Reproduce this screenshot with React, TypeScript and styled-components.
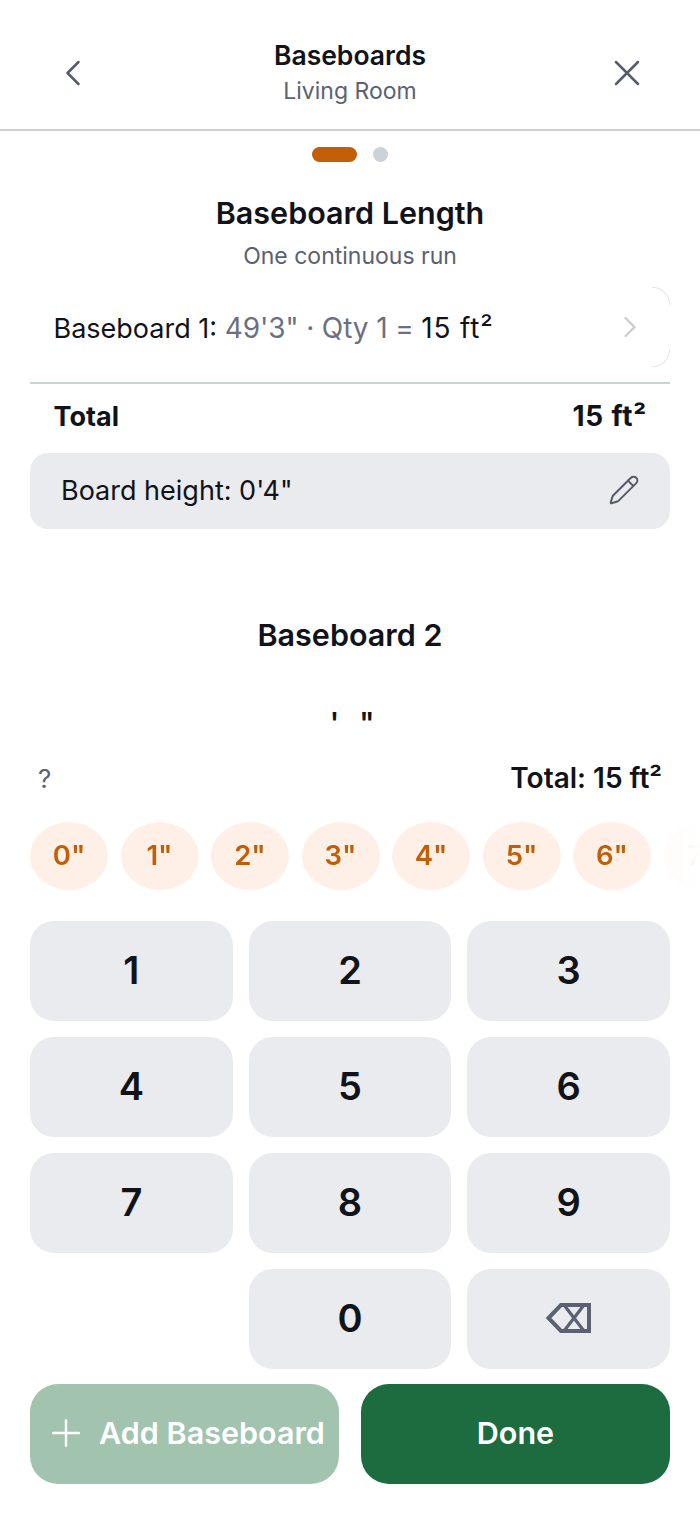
import React from 'react'
import styled, { createGlobalStyle } from 'styled-components'
import { ChevronLeft, ChevronRight, Pencil, Plus, X } from 'lucide-react'

const GlobalStyle = createGlobalStyle`
  html, body {
    margin: 0;
    padding: 0;
    background: #FFFFFF;
  }

  * {
    box-sizing: border-box;
  }
`

const Page = styled.div`
  width: 700px;
  height: 1515px;
  overflow: hidden;
  display: flex;
  flex-direction: column;
  font-family: 'Inter', 'Liberation Sans', sans-serif;
  color: #111318;
  background: #FFFFFF;
`

const Header = styled.header`
  height: 131px;
  flex-shrink: 0;
  display: flex;
  align-items: flex-start;
  justify-content: space-between;
  padding: 51px 40px 0;
  border-bottom: 2px solid #CDD0D5;
`

const IconButton = styled.button`
  width: 66px;
  height: 44px;
  padding: 0;
  display: flex;
  align-items: center;
  justify-content: center;
  border: none;
  background: none;
  color: #555B6A;
`

const HeaderTitles = styled.div`
  display: flex;
  flex-direction: column;
  align-items: center;
  margin-top: -13px;
`

const HeaderTitle = styled.div`
  font-size: 26.5px;
  line-height: 34px;
  font-weight: 600;
`

const HeaderSub = styled.div`
  font-size: 23px;
  line-height: 38px;
  color: #5B6172;
`

const Dots = styled.div`
  display: flex;
  justify-content: center;
  align-items: center;
  gap: 16px;
  margin-top: 16px;
`

const Dot = styled.span<{ $active?: boolean }>`
  width: ${p => (p.$active ? '45px' : '15px')};
  height: 15px;
  border-radius: 8px;
  background: ${p => (p.$active ? '#C25E08' : '#CBD2DA')};
`

const Heading = styled.h1`
  margin: 31px 0 0;
  text-align: center;
  font-size: 30.5px;
  line-height: 40px;
  font-weight: 600;
`

const SubHeading = styled.p`
  margin: 7px 0 0;
  text-align: center;
  font-size: 23px;
  line-height: 32px;
  color: #5B6172;
`

const Content = styled.div`
  padding: 0 30px;
  display: flex;
  flex-direction: column;
`

const EntryCard = styled.div`
  position: relative;
  height: 80px;
  margin-top: 15px;
  padding: 1px 24px 0 23.5px;
  display: flex;
  align-items: center;
  justify-content: space-between;
  font-size: 27px;
  color: #111318;

  &::before,
  &::after {
    content: '';
    position: absolute;
    right: 0;
    width: 17px;
    height: 17px;
    border-right: 1px solid #EAE3E5;
  }

  &::before {
    top: 0;
    border-top: 1px solid #EAE3E5;
    border-top-right-radius: 17px;
  }

  &::after {
    bottom: 0;
    border-bottom: 1px solid #EAE3E5;
    border-bottom-right-radius: 17px;
  }
`

const Muted = styled.span`
  font-size: 28px;
  letter-spacing: -0.1px;
  color: #6B7080;
`

const Area = styled.span`
  font-size: 28px;
  letter-spacing: 0.8px;
`

const EntryArrow = styled.span`
  display: flex;
  color: #C9CBCE;
  margin: 0 -2px 2px 0;
`

const Divider = styled.div`
  height: 2px;
  margin-top: 15px;
  background: #C9D4D2;
`

const TotalRow = styled.div`
  display: flex;
  justify-content: space-between;
  align-items: center;
  height: 66px;
  padding: 0 23px 2px 23.5px;
  font-size: 27px;
  font-weight: 700;
`

const HeightCard = styled.div`
  height: 76px;
  margin-top: 3px;
  padding: 0 30px 2px 31px;
  display: flex;
  align-items: center;
  justify-content: space-between;
  border-radius: 18px;
  background: #E9EBEE;
  font-size: 27px;
  color: #111318;
`

const PencilIcon = styled.span`
  display: flex;
  color: #555B6A;
`

const EntryTitle = styled.h2`
  margin: 86px 0 0;
  text-align: center;
  font-size: 30.5px;
  line-height: 40px;
  font-weight: 600;
`

const Marks = styled.div`
  height: 40px;
  margin-top: 48px;
  padding-left: 4px;
  display: flex;
  justify-content: center;
  gap: 20px;
  font-size: 29px;
  line-height: 40px;
  font-weight: 600;
`

const SummaryRow = styled.div`
  display: flex;
  justify-content: space-between;
  align-items: center;
  height: 40px;
  margin-top: 15px;
  padding: 0 8px;
  font-size: 28px;
  font-weight: 600;
`

const Hint = styled.span`
  font-weight: 400;
  font-size: 26px;
  color: #5B6172;
`

const ChipRail = styled.div`
  display: flex;
  gap: 12.5px;
  height: 68px;
  margin-top: 24px;
  padding-left: 30px;
  overflow: hidden;
  mask-image: linear-gradient(to right, #000 93%, rgba(0, 0, 0, 0.2) 95%, transparent 100%);
`

const Chip = styled.button`
  flex: 0 0 78px;
  height: 68px;
  padding: 0 0 3px;
  border: none;
  border-radius: 50%;
  background: #FEF0E7;
  color: #C25E08;
  font-family: inherit;
  font-size: 27.5px;
  font-weight: 600;
`

const Keypad = styled.div`
  display: grid;
  grid-template-columns: repeat(3, 1fr);
  grid-auto-rows: 100px;
  gap: 16px;
  margin-top: 31px;
  padding: 0 30px;
`

const Key = styled.button`
  display: flex;
  align-items: center;
  justify-content: center;
  padding: 0 0 2px;
  border: none;
  border-radius: 24px;
  background: #E9EBEE;
  color: #111318;
  font-family: inherit;
  font-size: 38px;
  font-weight: 600;
`

const Blank = styled.div``

const Actions = styled.div`
  display: flex;
  gap: 22px;
  margin-top: 15px;
  padding: 0 30px;
`

const ActionButton = styled.button<{ $muted?: boolean }>`
  flex: 1;
  height: 100px;
  padding: 0 0 3px;
  display: flex;
  align-items: center;
  justify-content: center;
  gap: 11px;
  border: none;
  border-radius: 28px;
  background: ${p => (p.$muted ? '#A2C4AF' : '#1C6C40')};
  color: #FFFFFF;
  font-family: inherit;
  font-size: 30.5px;
  font-weight: 600;
  white-space: nowrap;
`

const Backspace = () => (
  <svg width="44" height="30" viewBox="1 0 44 30" fill="none" stroke="#5B6172" strokeWidth="4" overflow="visible">
    <path d="M43 2H15L2.5 15 15 28H43Z" />
    <path d="M18 2 38 28M38 2 18 28" strokeWidth="3.2" />
  </svg>
)

const chips = ['0"', '1"', '2"', '3"', '4"', '5"', '6"', '7"']
const digits = ['1', '2', '3', '4', '5', '6', '7', '8', '9']

export default function App() {
  return (
    <Page>
      <GlobalStyle />
      <Header>
        <IconButton aria-label="Back">
          <ChevronLeft size={44} strokeWidth={1.35} />
        </IconButton>
        <HeaderTitles>
          <HeaderTitle>Baseboards</HeaderTitle>
          <HeaderSub>Living Room</HeaderSub>
        </HeaderTitles>
        <IconButton aria-label="Close">
          <X size={44} strokeWidth={1.35} />
        </IconButton>
      </Header>

      <Dots>
        <Dot $active />
        <Dot />
      </Dots>

      <Heading>Baseboard Length</Heading>
      <SubHeading>One continuous run</SubHeading>

      <Content>
        <EntryCard>
          <span>
            Baseboard 1: <Muted>49'3" · Qty 1 =</Muted> <Area>15 ft²</Area>
          </span>
          <EntryArrow>
            <ChevronRight size={36} strokeWidth={1.5} />
          </EntryArrow>
        </EntryCard>
        <Divider />
        <TotalRow>
          <span>Total</span>
          <Area>15 ft²</Area>
        </TotalRow>
        <HeightCard>
          <span>Board height: 0'4"</span>
          <PencilIcon>
            <Pencil size={32} strokeWidth={1.5} />
          </PencilIcon>
        </HeightCard>
        <EntryTitle>Baseboard 2</EntryTitle>
        <Marks>
          <span>'</span>
          <span>"</span>
        </Marks>
        <SummaryRow>
          <Hint>?</Hint>
          <span>Total: 15 ft²</span>
        </SummaryRow>
      </Content>

      <ChipRail>
        {chips.map(c => (
          <Chip key={c}>{c}</Chip>
        ))}
      </ChipRail>

      <Keypad>
        {digits.map(d => (
          <Key key={d}>{d}</Key>
        ))}
        <Blank />
        <Key>0</Key>
        <Key aria-label="Delete">
          <Backspace />
        </Key>
      </Keypad>

      <Actions>
        <ActionButton $muted>
          <Plus size={44} strokeWidth={1.3} />
          Add Baseboard
        </ActionButton>
        <ActionButton>Done</ActionButton>
      </Actions>
    </Page>
  )
}
